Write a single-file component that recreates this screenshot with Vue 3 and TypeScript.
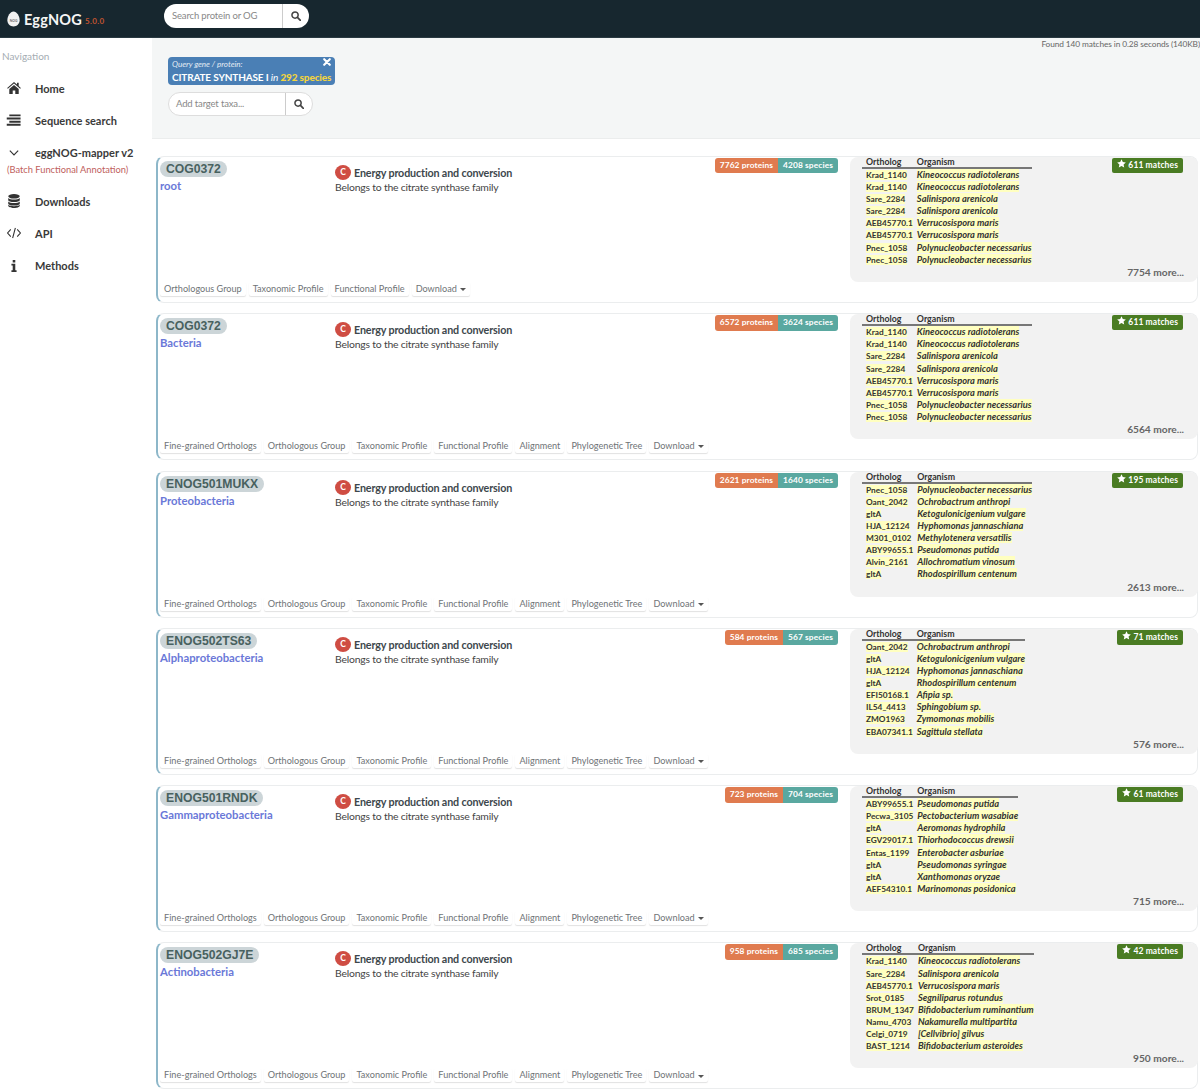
<script setup lang="ts">
type Row = [string, string]
interface Group {
  id: string
  taxon: string
  proteins: number
  species: number
  matches: number
  more: number
  fine: boolean
  rows: Row[]
}
const krad: Row = ['Krad_1140', 'Kineococcus radiotolerans']
const sare: Row = ['Sare_2284', 'Salinispora arenicola']
const aeb: Row = ['AEB45770.1', 'Verrucosispora maris']
const pnec: Row = ['Pnec_1058', 'Polynucleobacter necessarius']
const oant: Row = ['Oant_2042', 'Ochrobactrum anthropi']
const ket: Row = ['gltA', 'Ketogulonicigenium vulgare']
const hja: Row = ['HJA_12124', 'Hyphomonas jannaschiana']
const rho: Row = ['gltA', 'Rhodospirillum centenum']
const first: Row[] = [krad, krad, sare, sare, aeb, aeb, pnec, pnec]
const groups: Group[] = [
  { id: 'COG0372', taxon: 'root', proteins: 7762, species: 4208, matches: 611, more: 7754, fine: false, rows: first },
  { id: 'COG0372', taxon: 'Bacteria', proteins: 6572, species: 3624, matches: 611, more: 6564, fine: true, rows: first },
  { id: 'ENOG501MUKX', taxon: 'Proteobacteria', proteins: 2621, species: 1640, matches: 195, more: 2613, fine: true,
    rows: [pnec, oant, ket, hja, ['M301_0102', 'Methylotenera versatilis'], ['ABY99655.1', 'Pseudomonas putida'], ['Alvin_2161', 'Allochromatium vinosum'], rho] },
  { id: 'ENOG502TS63', taxon: 'Alphaproteobacteria', proteins: 584, species: 567, matches: 71, more: 576, fine: true,
    rows: [oant, ket, hja, rho, ['EFI50168.1', 'Afipia sp.'], ['IL54_4413', 'Sphingobium sp.'], ['ZMO1963', 'Zymomonas mobilis'], ['EBA07341.1', 'Sagittula stellata']] },
  { id: 'ENOG501RNDK', taxon: 'Gammaproteobacteria', proteins: 723, species: 704, matches: 61, more: 715, fine: true,
    rows: [['ABY99655.1', 'Pseudomonas putida'], ['Pecwa_3105', 'Pectobacterium wasabiae'], ['gltA', 'Aeromonas hydrophila'], ['EGV29017.1', 'Thiorhodococcus drewsii'], ['Entas_1199', 'Enterobacter asburiae'], ['gltA', 'Pseudomonas syringae'], ['gltA', 'Xanthomonas oryzae'], ['AEF54310.1', 'Marinomonas posidonica']] },
  { id: 'ENOG502GJ7E', taxon: 'Actinobacteria', proteins: 958, species: 685, matches: 42, more: 950, fine: true,
    rows: [krad, sare, aeb, ['Srot_0185', 'Segniliparus rotundus'], ['BRUM_1347', 'Bifidobacterium ruminantium'], ['Namu_4703', 'Nakamurella multipartita'], ['Celgi_0719', '[Cellvibrio] gilvus'], ['BAST_1214', 'Bifidobacterium asteroides']] },
]
const linksFor = (g: Group): string[] =>
  g.fine
    ? ['Fine-grained Orthologs', 'Orthologous Group', 'Taxonomic Profile', 'Functional Profile', 'Alignment', 'Phylogenetic Tree']
    : ['Orthologous Group', 'Taxonomic Profile', 'Functional Profile']
</script>

<template>
  <div class="page">
    <header class="top">
      <div class="brand">
        <svg class="egg" viewBox="0 0 14 16" width="13" height="16"><path d="M7 0C3.5 0 .4 5 .4 9.3.4 13.2 3.3 16 7 16s6.6-2.8 6.6-6.7C13.6 5 10.5 0 7 0z" fill="#f2f2f2"/><text x="7" y="11.500" text-anchor="middle" font-size="3.600" font-weight="700" fill="#666">NOG</text></svg>
        <span class="name">EggNOG</span>
        <span class="ver">5.0.0</span>
      </div>
      <div class="search head">
        <span class="ph">Search protein or OG</span>
        <span class="btn"><svg viewBox="0 0 16 16" width="10" height="10"><circle cx="6.5" cy="6.5" r="5" fill="none" stroke="#444" stroke-width="2.4"/><path d="M10.3 10.3 15 15" stroke="#444" stroke-width="2.8" stroke-linecap="round"/></svg></span>
      </div>
    </header>
    <div class="body">
      <aside class="side">
        <div class="navtitle">Navigation</div>
        <div class="item">
          <svg viewBox="0 0 16 14" width="14" height="12"><path d="M8 0 0 7l.8 1L8 1.8 15.2 8l.8-1-2.5-2.2V1h-2v2L8 0zM2.5 8.3V14h4V10h3v4h4V8.3L8 3.5z" fill="#333"/></svg>
          <span>Home</span>
        </div>
        <div class="item">
          <svg viewBox="0 0 16 12" width="15" height="12"><path d="M3 0h12v2H3zM0 3.4h15v2H0zM3 6.8h12v2H3zM0 10h15v2H0z" fill="#333"/></svg>
          <span>Sequence search</span>
        </div>
        <div class="item sub">
          <svg viewBox="0 0 12 8" width="10" height="7"><path d="M1 1.2 6 6.2l5-5" fill="none" stroke="#333" stroke-width="1.4"/></svg>
          <span>eggNOG-mapper v2</span>
        </div>
        <div class="batch">(Batch Functional Annotation)</div>
        <div class="item">
          <svg viewBox="0 0 14 16" width="13" height="14"><ellipse cx="7" cy="2.6" rx="6.6" ry="2.6" fill="#333"/><path d="M.4 4.6C1.6 6 4 6.4 7 6.4s5.4-.4 6.6-1.8v2.4C13.6 8.2 10.6 9.2 7 9.2S.4 8.200.4 7zM.4 8.600C1.600 10 4 10.400 7 10.400s5.400-.4 6.600-1.800v2.400c0 1.200-3 2.200-6.600 2.200S.4 12.200.4 11zM.4 12.400C1.600 13.600 4 14 7 14s5.400-.4 6.600-1.600v1c0 1.400-3 2.600-6.600 2.600S.4 14.800.4 13.400z" fill="#333"/></svg>
          <span>Downloads</span>
        </div>
        <div class="item">
          <svg viewBox="0 0 16 12" width="15" height="11"><path d="M4.500 2 1 6l3.500 4M11.500 2 15 6l-3.500 4M9.500 .5 6.500 11.500" fill="none" stroke="#333" stroke-width="1.200"/></svg>
          <span>API</span>
        </div>
        <div class="item">
          <svg viewBox="0 0 6 14" width="6" height="12"><path d="M1.500 0h3v2.800h-3zM0 4.500h4.500v7.500H6v2H0v-2h1.500V6.500H0z" fill="#333"/></svg>
          <span>Methods</span>
        </div>
      </aside>
      <main class="main">
        <section class="panel">
          <div class="found">Found 140 matches in 0.28 seconds (140KB)</div>
          <div class="query">
            <svg class="close" viewBox="0 0 10 10" width="8" height="8"><path d="M1.500 1.500 8.500 8.500M8.500 1.500 1.500 8.500" stroke="#fff" stroke-width="2.600" stroke-linecap="round"/></svg>
            <div class="qlabel">Query gene / protein:</div>
            <div class="qname">CITRATE SYNTHASE I <i>in</i> <b>292 species</b></div>
          </div>
          <div class="search taxa">
            <span class="ph">Add target taxa...</span>
            <span class="btn"><svg viewBox="0 0 16 16" width="10" height="10"><circle cx="6.500" cy="6.500" r="5" fill="none" stroke="#444" stroke-width="2.400"/><path d="M10.300 10.300 15 15" stroke="#444" stroke-width="2.800" stroke-linecap="round"/></svg></span>
          </div>
        </section>
        <div class="list">
          <article v-for="(g, i) in groups" :key="i" class="card">
            <div class="info">
              <div class="upper">
                <div class="og">
                  <span class="pill">{{ g.id }}</span>
                  <a class="taxon">{{ g.taxon }}</a>
                </div>
                <div class="func">
                  <div class="cat"><span class="c">C</span><b>Energy production and conversion</b></div>
                  <div class="desc">Belongs to the citrate synthase family</div>
                </div>
                <div class="badges">
                  <span class="prot">{{ g.proteins }} proteins</span><span class="spec">{{ g.species }} species</span>
                </div>
              </div>
              <nav class="links">
                <a v-for="l in linksFor(g)" :key="l">{{ l }}</a>
                <a>Download <i class="caret"></i></a>
              </nav>
            </div>
            <div class="hits">
              <span class="matches"><svg viewBox="0 0 16 16" width="9" height="9"><path d="m8 .5 2.300 5 5.400.6-4 3.700 1.100 5.400L8 12.500l-4.800 2.700 1.100-5.400-4-3.700 5.400-.6z" fill="#fff"/></svg> {{ g.matches }} matches</span>
              <table>
                <thead><tr><th>Ortholog</th><th>Organism</th></tr></thead>
                <tbody>
                  <tr v-for="(r, j) in g.rows" :key="j">
                    <td class="gene"><mark>{{ r[0] }}</mark></td>
                    <td class="org"><mark>{{ r[1] }}</mark></td>
                  </tr>
                </tbody>
              </table>
              <div class="more">{{ g.more }} more...</div>
            </div>
          </article>
        </div>
      </main>
    </div>
  </div>
</template>

<style>
html, body { margin: 0; background: #fff; }
</style>

<style scoped>
.page { font-family: "Lato", "Open Sans", sans-serif; color: #333; width: 1200px; height: 1089px; overflow: hidden; }
.top { height: 38px; background: #17272f; display: flex; align-items: flex-start; box-sizing: border-box; border-bottom: 1px solid #2a3a42; }
.brand { width: 164px; height: 38px; display: flex; align-items: center; padding-left: 7px; box-sizing: border-box; }
.name { color: #f5f5f5; font-size: 14.500px; font-weight: 700; margin-left: 4px; letter-spacing: .2px; }
.ver { color: #c0532f; font-size: 8px; font-weight: 700; margin: 3px 0 0 3px; letter-spacing: .4px; }
.search { display: flex; align-items: center; background: #fff; border-radius: 12px; box-sizing: border-box; width: 145px; height: 24px; font-size: 9.500px; letter-spacing: -.15px; color: #888; }
.search .ph { flex: 1; padding-left: 8px; line-height: 22px; }
.search .btn { width: 27px; height: 100%; border-left: 1px solid #ccc; display: flex; align-items: center; justify-content: center; box-sizing: border-box; }
.head { margin-top: 4px; }
.body { display: flex; }
.side { width: 152px; flex: none; padding-top: 11px; }
.navtitle { font-size: 10px; color: #a5adb3; padding-left: 2px; height: 14px; line-height: 14px; margin-bottom: 9px; }
.item { display: flex; align-items: center; height: 32.300px; font-size: 11px; font-weight: 700; color: #3a3a3a; position: relative; padding-left: 35px; box-sizing: border-box; }
.item svg { position: absolute; left: 14px; top: 50%; transform: translate(-50%, -50%); }
.batch { font-size: 9.300px; color: #c0605c; padding-left: 7px; margin-top: -7px; height: 23px; line-height: 15px; }
.main { flex: 1; min-width: 0; }
.panel { background: #f4f6f6; height: 101px; border-bottom: 1px solid #ebeded; box-sizing: border-box; position: relative; padding: 19px 0 0 16px; }
.found { position: absolute; right: 0; top: 0; font-size: 8.300px; letter-spacing: -.1px; color: #666; line-height: 12px; white-space: nowrap; }
.query { width: 167px; height: 28px; background: #4a7fb5; border-radius: 4px; color: #fff; position: relative; box-sizing: border-box; padding: 2px 0 0 4px; }
.close { position: absolute; right: 4px; top: 1px; }
.qlabel { font-size: 8px; font-style: italic; line-height: 10px; color: #e4ecf4; }
.qname { font-size: 10px; letter-spacing: -.15px; font-weight: 700; line-height: 17px; white-space: nowrap; }
.qname i { font-weight: 400; }
.qname b { color: #f2d33c; }
.taxa { margin-top: 7px; border: 1px solid #ddd; width: 145px; height: 24px; }
.taxa .ph { padding-left: 7px; }
.list { display: flex; flex-direction: column; gap: 10.300px; padding: 17px 2px 0 4px; }
.card { flex: none; height: 147px; display: flex; border: 1px solid #ebedee; border-left: 2px solid #8db7c9; border-radius: 8px; box-sizing: border-box; }
.info { flex: 1; min-width: 0; display: flex; flex-direction: column; }
.upper { display: flex; flex: 1; padding: 4px 12px 0 2px; }
.og { width: 175px; flex: none; }
.pill { display: block; width: max-content; background: #ccd5d8; color: #48615f; font-family: "Liberation Sans", sans-serif; font-size: 12.200px; font-weight: 700; border-radius: 9px; padding: 0 6px; line-height: 16px; }
.taxon { display: block; color: #6a78d8; font-size: 11.300px; font-weight: 700; line-height: 14px; margin-top: 2px; }
.func { flex: 1; padding-top: 4px; }
.cat { display: flex; align-items: center; font-size: 10.750px; letter-spacing: -.15px; color: #3d474c; line-height: 15px; }
.c { width: 16px; height: 15px; border-radius: 50%; background: #cf4d43; color: #fff; font-size: 8.500px; font-weight: 700; display: flex; align-items: center; justify-content: center; margin-right: 3px; }
.desc { font-size: 10.400px; letter-spacing: -.2px; color: #444; line-height: 14px; }
.badges { display: flex; height: 15.400px; font-size: 8.400px; letter-spacing: .1px; font-weight: 700; color: #fff; line-height: 15px; margin-top: -3px; }
.prot { background: #e07b4f; padding: 0 5px; border-radius: 3px 0 0 3px; }
.spec { background: #5aa8a0; padding: 0 5px; border-radius: 0 3px 3px 0; }
.links { display: flex; gap: 3px; padding: 0 0 6px 2px; font-size: 9.150px; color: #6f7477; height: 14px; }
.links a { padding: 0 4px; line-height: 14px; box-shadow: 0 1px 1px rgba(0, 0, 0, .12); border-radius: 2px; }
.caret { display: inline-block; border: 3px solid transparent; border-top-color: #555; border-bottom: 0; vertical-align: middle; margin-left: 1px; }
.hits { width: 348px; flex: none; height: 125px; background: #f2f2f2; border-radius: 8px; position: relative; box-sizing: border-box; padding: 0 0 0 12px; align-self: flex-start; margin-right: -1px; }
.matches { position: absolute; right: 15px; top: 1px; background: #4a7c23; color: #fff; font-size: 8.500px; letter-spacing: .1px; font-weight: 700; line-height: 15px; padding: 0 5px; border-radius: 2px; }
table { border-collapse: collapse; font-size: 9.300px; }
th { text-align: left; font-weight: 700; font-size: 8.800px; padding: 0 0 0 4px; line-height: 10px; border-bottom: 2px solid #777; color: #333; }
td { padding: 0 0 0 4px; line-height: 12.100px; font-weight: 700; white-space: nowrap; color: #333; }
.gene { font-size: 8.300px; }
.org { font-style: italic; }
mark { background: #ffffc0; color: inherit; }
.more { position: absolute; right: 14px; bottom: 3px; font-size: 10.200px; font-weight: 700; color: #666; line-height: 14px; }
</style>
